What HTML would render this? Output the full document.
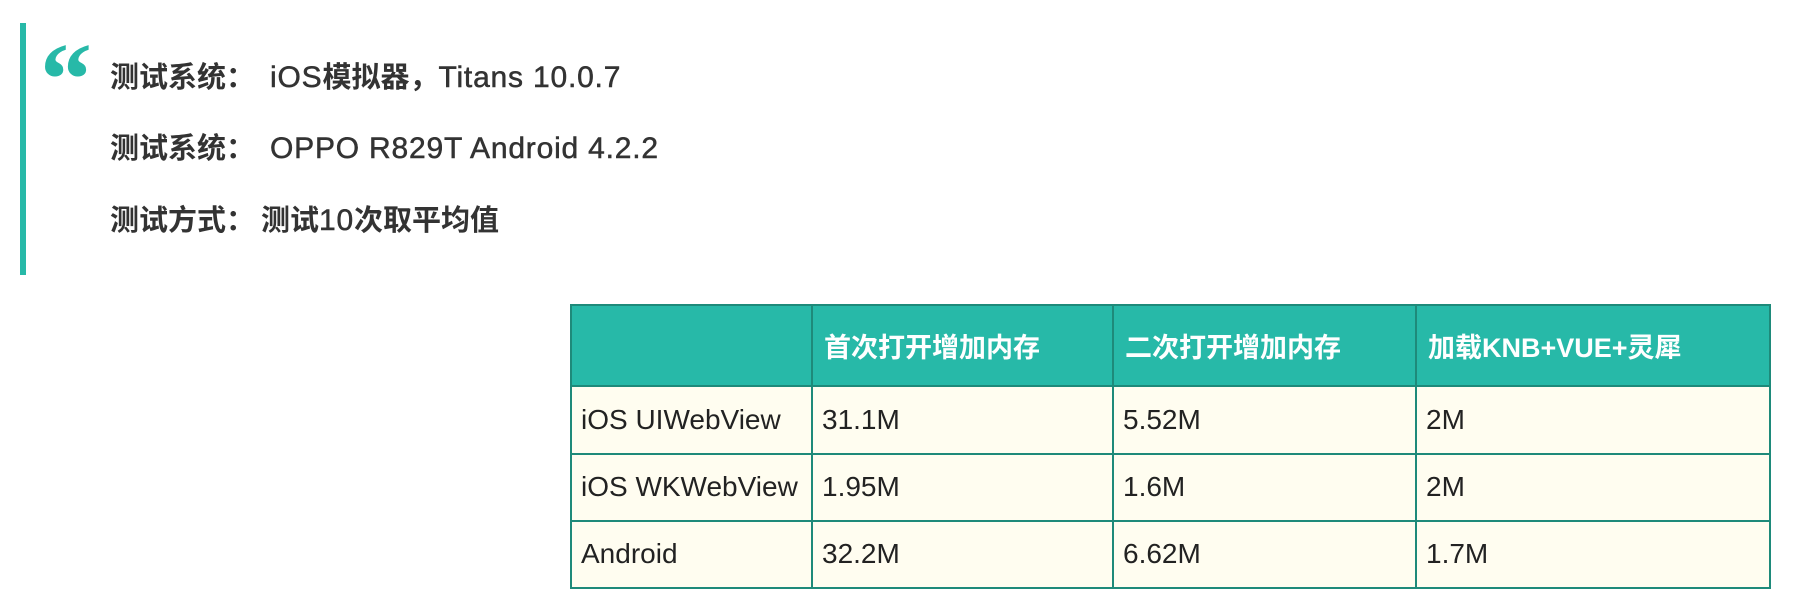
<!DOCTYPE html>
<html><head><meta charset="utf-8"><style>
html,body{margin:0;padding:0;background:#fff;width:1802px;height:610px;overflow:hidden;position:relative;font-family:"Liberation Sans","Noto Sans CJK SC",sans-serif;}
.bar{position:absolute;left:20px;top:23px;width:6px;height:252px;background:#27b9a8;}
.q{position:absolute;left:40px;top:28px;font-family:"Liberation Serif",serif;font-size:104px;font-weight:bold;color:#27b9a8;line-height:1;}
.ln{position:absolute;left:110px;font-size:29px;color:#333;font-weight:bold;white-space:nowrap;line-height:32px;}
.ln .l{font-size:30px;letter-spacing:0.8px;font-weight:normal;-webkit-text-stroke:0.5px #333;}
.g{display:inline-block;width:15px;}
table{position:absolute;left:570px;top:304px;width:1201px;height:285px;border-collapse:collapse;border:2px solid #1e8a7a;}
td,th{border:2px solid #1e8a7a;padding:0 0 0 9px;text-align:left;font-size:28px;color:#222;background:#fffdf0;font-weight:normal;}
th{background:#27b9a8;color:#fff;font-weight:bold;font-size:27px;height:78px;padding-left:11px;}
td{height:64px;}
</style></head><body>
<div class="bar"></div>
<div class="q">“</div>
<div class="ln" style="top:62px">测试系统：<span class="g"></span><span class="l">iOS</span>模拟器，<span class="l">Titans 10.0.7</span></div>
<div class="ln" style="top:133px">测试系统：<span class="g"></span><span class="l">OPPO R829T Android 4.2.2</span></div>
<div class="ln" style="top:205px">测试方式：<span style="display:inline-block;width:6px"></span>测试<span class="l">10</span>次取平均值</div>
<table>
<tr><th style="width:228px"></th><th style="width:288px">首次打开增加内存</th><th style="width:290px">二次打开增加内存</th><th>加载KNB+VUE+灵犀</th></tr>
<tr><td>iOS UIWebView</td><td>31.1M</td><td>5.52M</td><td>2M</td></tr>
<tr><td>iOS WKWebView</td><td>1.95M</td><td>1.6M</td><td>2M</td></tr>
<tr><td>Android</td><td>32.2M</td><td>6.62M</td><td>1.7M</td></tr>
</table>
</body></html>
